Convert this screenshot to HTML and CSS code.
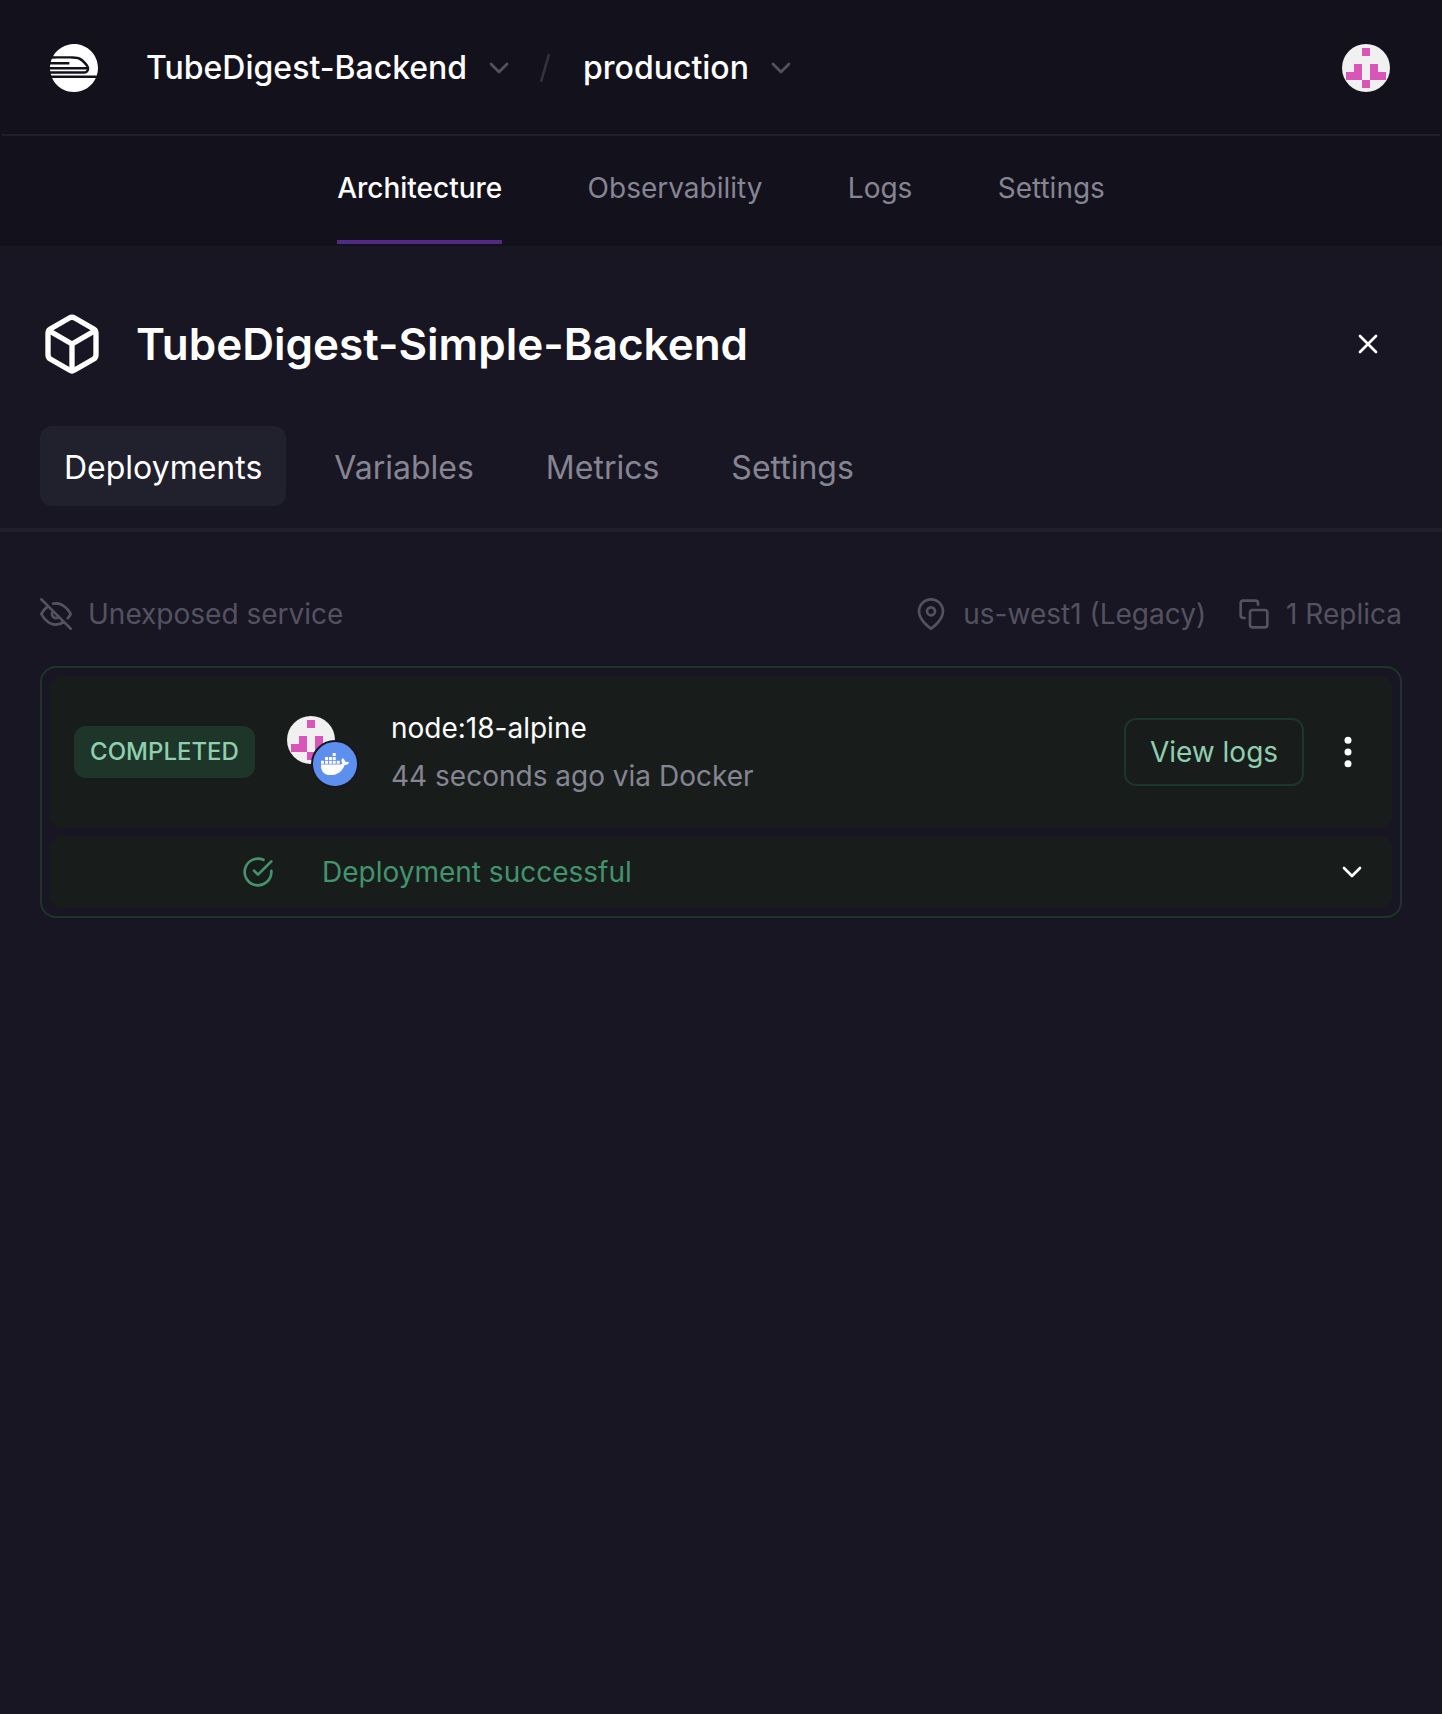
FILE: index.html
```html
<!DOCTYPE html>
<html lang="en">
<head>
<meta charset="utf-8">
<title>TubeDigest-Simple-Backend</title>
<link rel="stylesheet" href="styles.css">
</head>
<body>
<svg class="defs" width="0" height="0" aria-hidden="true">
  <symbol id="identicon" viewBox="0 0 48 48">
    <rect width="48" height="48" fill="#f0f0f0"/>
    <path fill="#d956b8" d="M20 4h8v8h-8zM12 20h8v16H4v-8h8zM28 20h8v8h8v8H28zM20 36h8v8h-8z"/>
  </symbol>
  <symbol id="chevron" viewBox="0 0 24 24">
    <path d="M6 9l6 6 6-6"/>
  </symbol>
</svg>

<header class="topbar">
  <svg class="logo" viewBox="0 0 24 24" fill="#fff"><path d="M.113 10.27A13.026 13.026 0 000 11.48h18.23c-.064-.125-.15-.237-.235-.347-3.117-4.027-4.793-3.677-7.19-3.78-.8-.034-1.34-.048-4.524-.048-1.704 0-3.555.005-5.358.01-.234.63-.459 1.24-.567 1.737h9.342v1.216H.113v.002zm18.26 2.426H.009c.02.326.05.645.094.961h16.955c.754 0 1.179-.429 1.315-.96zm-17.318 4.28s2.81 6.902 10.93 7.024c4.855 0 9.027-2.883 10.92-7.024H1.056zM11.988 0C7.5 0 3.593 2.466 1.531 6.108l4.75-.005v-.002c3.71 0 3.849.016 4.573.047l.448.016c1.563.052 3.485.22 4.996 1.364.82.621 2.007 1.99 2.712 2.965.654.902.842 1.94.396 2.934-.408.914-1.289 1.458-2.353 1.458H.391s.099.42.249.886h22.748A12.026 12.026 0 0024 12.005C24 5.377 18.621 0 11.988 0z"/></svg>
  <span class="crumb crumb-project">TubeDigest-Backend</span>
  <svg class="icon crumb-chevron"><use href="#chevron"/></svg>
  <svg class="slash" viewBox="0 0 10 28"><path d="M8.700 1.300L1.300 26.700"/></svg>
  <span class="crumb crumb-env">production</span>
  <svg class="icon crumb-chevron"><use href="#chevron"/></svg>
  <svg class="avatar"><use href="#identicon"/></svg>
</header>

<nav class="mainnav">
  <a class="navlink navlink-active">Architecture</a>
  <a class="navlink">Observability</a>
  <a class="navlink">Logs</a>
  <a class="navlink">Settings</a>
</nav>

<main class="panel">
  <div class="panel-head">
    <svg class="cube" viewBox="0 0 24 24"><path d="M21 16V8a2 2 0 0 0-1-1.73l-7-4a2 2 0 0 0-2 0l-7 4A2 2 0 0 0 3 8v8a2 2 0 0 0 1 1.73l7 4a2 2 0 0 0 2 0l7-4A2 2 0 0 0 21 16z"/><path d="M3.27 6.96L12 12.01l8.73-5.05M12 22.08V12"/></svg>
    <h1 class="title">TubeDigest-Simple-Backend</h1>
    <svg class="icon close" viewBox="0 0 24 24"><path d="M18 6L6 18M6 6l12 12"/></svg>
  </div>

  <div class="tabs">
    <a class="tab tab-active">Deployments</a>
    <a class="tab">Variables</a>
    <a class="tab">Metrics</a>
    <a class="tab">Settings</a>
  </div>

  <section class="content">
    <div class="meta">
      <svg class="icon" viewBox="0 0 24 24"><path d="M17.94 17.94A10.07 10.07 0 0 1 12 20c-7 0-11-8-11-8a18.45 18.45 0 0 1 5.06-5.94M9.9 4.24A9.12 9.12 0 0 1 12 4c7 0 11 8 11 8a18.5 18.5 0 0 1-2.16 3.19m-6.72-1.07a3 3 0 1 1-4.24-4.24M1 1l22 22"/></svg>
      <span class="meta-exposure">Unexposed service</span>
      <svg class="icon" viewBox="0 0 24 24"><path d="M21 10c0 7-9 13-9 13s-9-6-9-13a9 9 0 0 1 18 0z"/><circle cx="12" cy="10" r="3"/></svg>
      <span class="meta-region">us-west1 (Legacy)</span>
      <svg class="icon" viewBox="0 0 24 24"><rect x="9" y="9" width="13" height="13" rx="2"/><path d="M5 15H4a2 2 0 0 1-2-2V4a2 2 0 0 1 2-2h9a2 2 0 0 1 2 2v1"/></svg>
      <span class="meta-replica">1 Replica</span>
    </div>

    <article class="card">
      <div class="deploy">
        <span class="badge">COMPLETED</span>
        <div class="source">
          <svg class="avatar source-avatar"><use href="#identicon"/></svg>
          <svg class="docker" viewBox="0 0 44 44" fill="#fff"><path d="M19.7 11h3v3h-3zM12 15h3v3h-3zM15.9 15h3v3h-3zM19.7 15h3v3h-3zM8 18.8h3v3H8zM12 18.8h3v3h-3zM15.9 18.8h3v3h-3zM19.7 18.8h3v3h-3zM23.7 18.8h3v3h-3z"/><path d="M8 22.6h18.2c1.5 0 2.6-.4 3.2-1-1.4-1.9-1.2-4 .1-5.6 1.6 1 2.5 2.3 2.6 3.8 1.500-.3 3-.1 4.1.7-.8 1.800-2.300 2.500-4.500 2.400C29.200 29.200 24.800 33 17.700 33 11 33 7.800 29.300 8 22.600z"/></svg>
        </div>
        <div class="details">
          <span class="image-name">node:18-alpine</span>
          <span class="image-age">44 seconds ago via Docker</span>
        </div>
        <button class="logs-button">View logs</button>
        <svg class="icon kebab" viewBox="0 0 32 32"><circle cx="16" cy="4.300" r="3.500"/><circle cx="16" cy="16" r="3.500"/><circle cx="16" cy="27.700" r="3.500"/></svg>
      </div>
      <div class="status">
        <svg class="icon status-check" viewBox="0 0 24 24"><path d="M22 11.080V12a10 10 0 1 1-5.930-9.140M22 4L12 14.010l-3-3"/></svg>
        <span class="status-text">Deployment successful</span>
        <svg class="icon status-chevron"><use href="#chevron"/></svg>
      </div>
    </article>
  </section>
</main>
</body>
</html>
```
FILE: styles.css
```css
* { box-sizing: border-box; }

body {
  margin: 0;
  min-height: 1714px;
  display: flex;
  flex-direction: column;
  background: #13111c;
  color: #fff;
  font-family: Inter, "Liberation Sans", sans-serif;
  font-size: 28px;
  line-height: 40px;
  white-space: nowrap;
}

.defs { position: absolute; }

.icon {
  width: 32px;
  height: 32px;
  flex: none;
  fill: none;
  stroke: currentColor;
  stroke-width: 2;
  stroke-linecap: round;
  stroke-linejoin: round;
}

.avatar {
  width: 48px;
  height: 48px;
  flex: none;
  border-radius: 50%;
}

/* Top bar */
.topbar {
  height: 136px;
  margin: 0 2px;
  padding: 2px 50px 0 48px;
  display: flex;
  align-items: center;
  border-bottom: 2px solid #201f2d;
}
.topbar .avatar { margin-left: auto; }
.logo { width: 48px; height: 48px; margin-right: 48px; flex: none; }
.crumb { font-size: 32px; font-weight: 500; }
.crumb-project { width: 321px; }
.crumb-env { width: 166px; }
.crumb-chevron { color: #545260; margin-left: 16px; }
.slash {
  width: 10px;
  height: 28px;
  margin: 0 33px 0 25px;
  fill: none;
  stroke: #33323e;
  stroke-width: 2.6;
  stroke-linecap: round;
}

/* Project navigation */
.mainnav {
  height: 110px;
  padding-bottom: 2px;
  display: flex;
  justify-content: center;
  gap: 85.3px;
}
.navlink {
  padding-top: 32px;
  color: #868593;
  border-bottom: 4px solid transparent;
}
.navlink-active { color: #fff; font-weight: 500; border-color: #532a83; }

/* Service panel */
.panel { flex: 1; background: #181622; }
.panel-head {
  height: 180px;
  padding: 16px 58px 0 40px;
  display: flex;
  align-items: center;
}
.cube {
  width: 64px;
  height: 64px;
  fill: none;
  stroke: #fff;
  stroke-width: 2;
  stroke-linecap: round;
  stroke-linejoin: round;
}
.title { margin: 0 auto 0 32px; font-size: 44px; line-height: 56px; font-weight: 600; }

.tabs {
  height: 106px;
  padding: 0 40px;
  display: flex;
  gap: 24px;
  border-bottom: 4px solid #201f2d;
}
.tab {
  height: 80px;
  padding: 0 24px;
  border-radius: 12px;
  color: #868593;
  font-size: 32px;
  line-height: 84px;
}
.tab-active { background: #21202d; color: #fff; }

.content { padding: 62px 40px 0; }
.meta { display: flex; align-items: center; color: #545260; }
.meta-exposure { margin: 0 auto 0 16px; }
.meta-region { margin: 0 32px 0 16px; }
.meta-replica { margin-left: 16px; }

/* Deployment card */
.card {
  margin-top: 32px;
  padding: 8px;
  display: flex;
  flex-direction: column;
  gap: 8px;
  border: 2px solid #1e3529;
  border-radius: 16px;
}
.deploy, .status {
  display: flex;
  align-items: center;
  border-radius: 12px;
  background: #181d1b;
}
.deploy { height: 152px; padding: 0 28px 0 24px; }
.badge {
  height: 52px;
  width: 181px;
  border-radius: 12px;
  background: #1e3529;
  color: #8fcfb0;
  font-size: 24px;
  line-height: 52px;
  font-weight: 500;
  text-align: center;
}
.source { position: relative; width: 72px; height: 72px; margin-left: 32px; }
.source-avatar { display: block; }
.docker {
  position: absolute;
  right: 0;
  bottom: 0;
  width: 48px;
  height: 48px;
  border: 2px solid #181622;
  border-radius: 50%;
  background: #5c8fee;
}
.details { display: flex; flex-direction: column; gap: 8px; margin: 0 auto 0 32px; }
.image-age { color: #868593; }
.logs-button {
  width: 180px;
  height: 68px;
  padding: 0;
  border: 2px solid #1e3529;
  border-radius: 12px;
  background: transparent;
  color: #8fcfb0;
  font: inherit;
}
.kebab { margin-left: 28px; fill: #fff; stroke: none; }
.status { height: 72px; padding: 0 24px 0 192px; }
.status-check { color: #42946e; }
.status-text { margin: 0 auto 0 48px; color: #42946e; }
```
